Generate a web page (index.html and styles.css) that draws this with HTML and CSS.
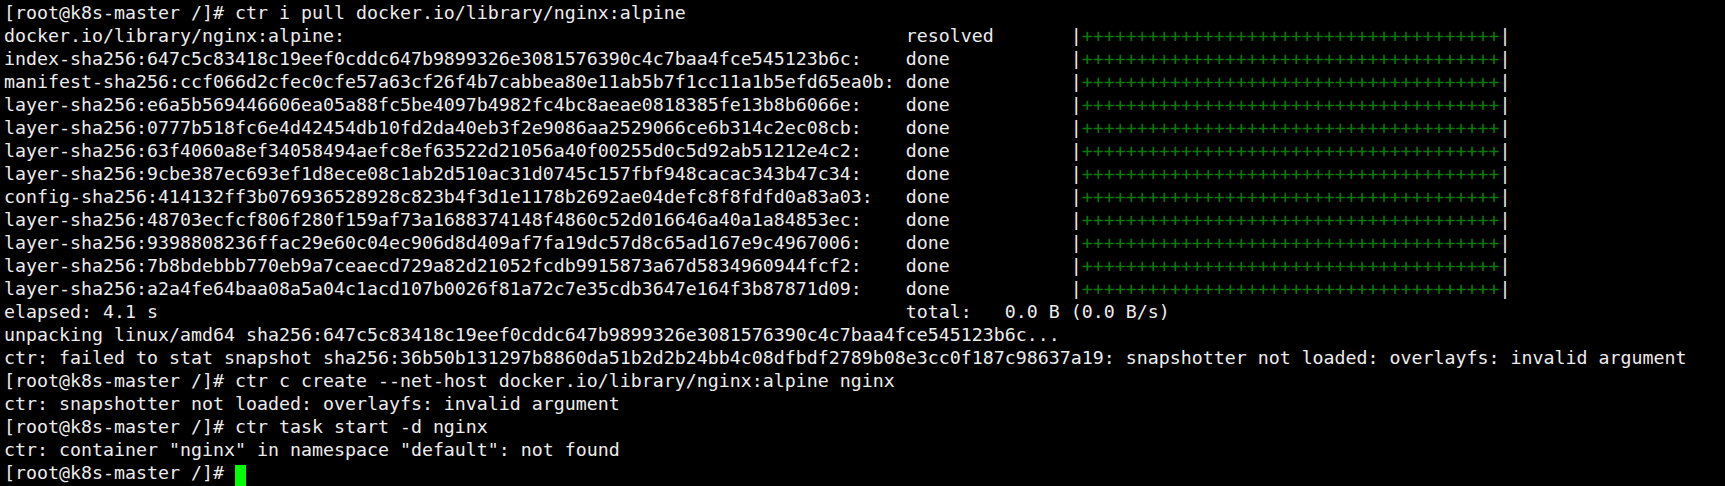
FILE: index.html
```html
<!DOCTYPE html>
<html>
<head>
<meta charset="utf-8">
<link rel="stylesheet" href="styles.css">
</head>
<body>
<pre class="term">[root@k8s-master /]# ctr i pull docker.io/library/nginx:alpine
docker.io/library/nginx:alpine:                                                   resolved       |<span class="g">++++++++++++++++++++++++++++++++++++++</span>|
index-sha256:647c5c83418c19eef0cddc647b9899326e3081576390c4c7baa4fce545123b6c:    done           |<span class="g">++++++++++++++++++++++++++++++++++++++</span>|
manifest-sha256:ccf066d2cfec0cfe57a63cf26f4b7cabbea80e11ab5b7f1cc11a1b5efd65ea0b: done           |<span class="g">++++++++++++++++++++++++++++++++++++++</span>|
layer-sha256:e6a5b569446606ea05a88fc5be4097b4982fc4bc8aeae0818385fe13b8b6066e:    done           |<span class="g">++++++++++++++++++++++++++++++++++++++</span>|
layer-sha256:0777b518fc6e4d42454db10fd2da40eb3f2e9086aa2529066ce6b314c2ec08cb:    done           |<span class="g">++++++++++++++++++++++++++++++++++++++</span>|
layer-sha256:63f4060a8ef34058494aefc8ef63522d21056a40f00255d0c5d92ab51212e4c2:    done           |<span class="g">++++++++++++++++++++++++++++++++++++++</span>|
layer-sha256:9cbe387ec693ef1d8ece08c1ab2d510ac31d0745c157fbf948cacac343b47c34:    done           |<span class="g">++++++++++++++++++++++++++++++++++++++</span>|
config-sha256:414132ff3b076936528928c823b4f3d1e1178b2692ae04defc8f8fdfd0a83a03:   done           |<span class="g">++++++++++++++++++++++++++++++++++++++</span>|
layer-sha256:48703ecfcf806f280f159af73a1688374148f4860c52d016646a40a1a84853ec:    done           |<span class="g">++++++++++++++++++++++++++++++++++++++</span>|
layer-sha256:9398808236ffac29e60c04ec906d8d409af7fa19dc57d8c65ad167e9c4967006:    done           |<span class="g">++++++++++++++++++++++++++++++++++++++</span>|
layer-sha256:7b8bdebbb770eb9a7ceaecd729a82d21052fcdb9915873a67d5834960944fcf2:    done           |<span class="g">++++++++++++++++++++++++++++++++++++++</span>|
layer-sha256:a2a4fe64baa08a5a04c1acd107b0026f81a72c7e35cdb3647e164f3b87871d09:    done           |<span class="g">++++++++++++++++++++++++++++++++++++++</span>|
elapsed: 4.1 s                                                                    total:   0.0 B (0.0 B/s)
unpacking linux/amd64 sha256:647c5c83418c19eef0cddc647b9899326e3081576390c4c7baa4fce545123b6c...
ctr: failed to stat snapshot sha256:36b50b131297b8860da51b2d2b24bb4c08dfbdf2789b08e3cc0f187c98637a19: snapshotter not loaded: overlayfs: invalid argument
[root@k8s-master /]# ctr c create --net-host docker.io/library/nginx:alpine nginx
ctr: snapshotter not loaded: overlayfs: invalid argument
[root@k8s-master /]# ctr task start -d nginx
ctr: container "nginx" in namespace "default": not found
[root@k8s-master /]# <span class="cursor"> </span></pre>
</body>
</html>
```

FILE: styles.css
```css
html, body {
  margin: 0;
  padding: 0;
  background: #000000;
  height: 100%;
  overflow: hidden;
}

.term {
  margin: 0;
  padding: 1px 0 0 4px;
  font-family: "DejaVu Sans Mono", monospace;
  font-size: 18.27px;
  line-height: 23px;
  color: #ececec;
  white-space: pre;
}

.g {
  color: #0a7a0a;
}

.cursor {
  display: inline-block;
  width: 11px;
  height: 21px;
  background: #00ff00;
  vertical-align: -4px;
}
```
